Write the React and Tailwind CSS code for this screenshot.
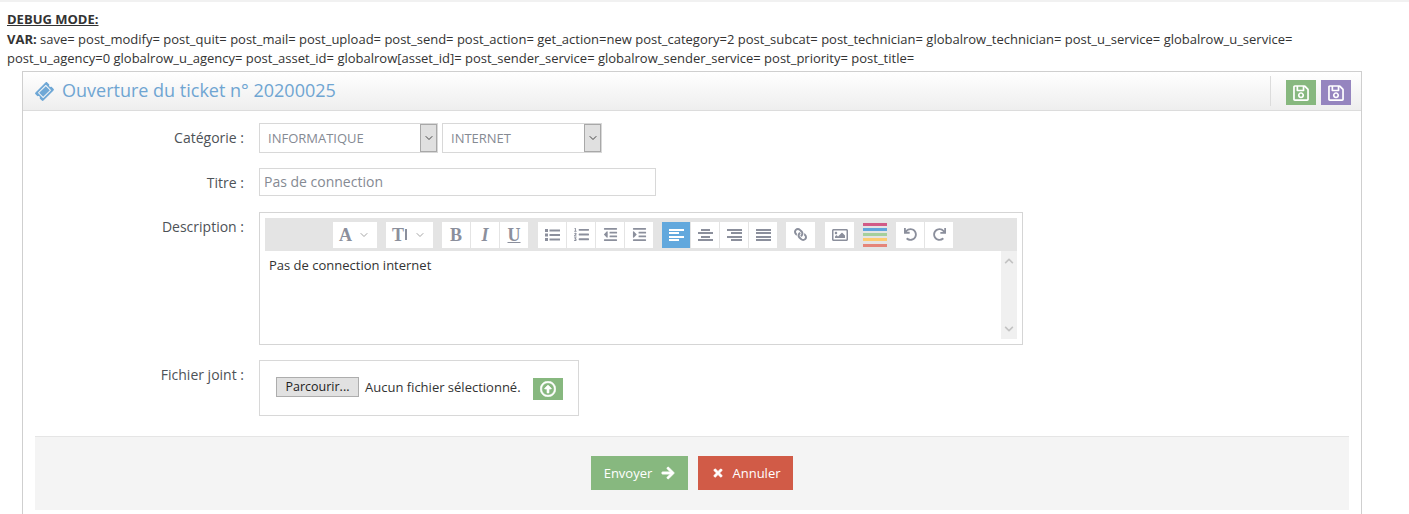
import React from "react";
import {
  FaTicketAlt,
  FaRegSave,
  FaListOl,
  FaOutdent,
  FaIndent,
  FaLink,
  FaRegImage,
  FaUndo,
  FaRedo,
  FaRegArrowAltCircleUp,
  FaArrowRight,
  FaTimes,
  FaChevronUp,
  FaChevronDown,
} from "react-icons/fa";
import { LuChevronDown } from "react-icons/lu";

// square-ended bars, the rounded ones from the icon pack look too thin here
function AlignIcon({ rows }) {
  return (
    <svg width="15" height="12" viewBox="0 0 15 12" fill="currentColor">
      {rows.map(([x, w], i) => (
        <rect key={i} x={x} y={[0, 3, 7, 10][i]} width={w} height="2" />
      ))}
    </svg>
  );
}

function ListUlIcon() {
  return (
    <svg width="15" height="12" viewBox="0 0 15 12" fill="currentColor">
      <rect x="0" y="0" width="3" height="3" />
      <rect x="0" y="4.5" width="3" height="3" />
      <rect x="0" y="9" width="3" height="3" />
      <rect x="4.5" y="0.5" width="10.5" height="2" />
      <rect x="4.5" y="5" width="10.5" height="2" />
      <rect x="4.5" y="9.5" width="10.5" height="2" />
    </svg>
  );
}

function ToolBtn({ children, active, className = "w-[28px]" }) {
  return (
    <div
      className={`h-[26px] flex items-center justify-center ${
        active ? "bg-[#62a8dd] text-white" : "bg-white text-[#8b8f9c]"
      } ${className}`}
    >
      {children}
    </div>
  );
}

function Glyph({ children, className = "" }) {
  return <span className={`text-[18px] leading-none font-bold font-['Liberation_Serif',serif] ${className}`}>{children}</span>;
}

function DropBtn({ children, width }) {
  return (
    <div className={`${width} h-[26px] bg-white text-[#8b8f9c] flex items-center pl-[6px] pr-[7px] justify-between`}>
      <div className="flex items-center">{children}</div>
      <LuChevronDown size={12} className="text-[#a5a5a5]" />
    </div>
  );
}

function Select({ value, width }) {
  return (
    <div className={`${width} h-[30px] border border-[#d8d8d8] flex items-stretch bg-white`}>
      <div className="flex-1 pl-[8px] text-[13px] leading-[29px] text-[#858a93]">{value}</div>
      <div className="w-[17px] bg-[#e0e0e0] border border-[#a8a8a8] flex items-center justify-center text-[#444]">
        <LuChevronDown size={12} />
      </div>
    </div>
  );
}

function Label({ children, className = "" }) {
  return <div className={`w-[221px] mr-[15px] text-right text-[14px] text-[#4d5257] ${className}`}>{children}</div>;
}

export default function App() {
  return (
    <div className="w-[1409px] h-[514px] overflow-hidden bg-white text-[13px] leading-[19.5px] text-[#333] font-['Open_Sans',sans-serif]">
      <div className="h-[2px] bg-[#f1f1f1]" />

      {/* Debug */}
      <div className="pl-[7px] pt-[8px] h-[69px]">
        <div className="font-bold underline">DEBUG MODE:</div>
        <div>
          <b>VAR:</b> save= post_modify= post_quit= post_mail= post_upload= post_send= post_action= get_action=new post_category=2 post_subcat= post_technician= globalrow_technician= post_u_service= globalrow_u_service=
        </div>
        <div>
          post_u_agency=0 globalrow_u_agency= post_asset_id= globalrow[asset_id]= post_sender_service= globalrow_sender_service= post_priority= post_title=
        </div>
      </div>

      {/* Panel */}
      <div className="ml-[22px] w-[1340px] h-[460px] border border-b-0 border-[#cfcfcf]">
        <div className="h-[39px] border-b border-[#dcdcdc] bg-gradient-to-b from-white to-[#eeeeee] flex items-center pl-[13px] pr-[10px]">
          <FaTicketAlt size={17} className="-rotate-45 text-[#6fa8d6] mr-[9px]" />
          <div className="text-[18px] text-[#6fa5d2]">Ouverture du ticket n° 20200025</div>
          <div className="ml-auto h-[30px] border-l border-[#dcdcdc] pl-[15px] flex gap-[5px]">
            <div className="w-[30px] h-[25px] mt-[4px] bg-[#87b87f] flex items-center justify-center text-white">
              <FaRegSave size={18} />
            </div>
            <div className="w-[30px] h-[25px] mt-[4px] bg-[#9585bf] flex items-center justify-center text-white">
              <FaRegSave size={18} />
            </div>
          </div>
        </div>

        <div className="pt-[12px]">
          <div className="flex items-center h-[30px]">
            <Label>Catégorie :</Label>
            <div className="flex gap-[4px]">
              <Select value="INFORMATIQUE" width="w-[179px]" />
              <Select value="INTERNET" width="w-[160px]" />
            </div>
          </div>

          <div className="flex items-center h-[28px] mt-[15px]">
            <Label className="pt-[2px]">Titre :</Label>
            <div className="w-[397px] h-[28px] border border-[#d8d8d8] pl-[4px] text-[14px] leading-[26px] text-[#858a93]">
              Pas de connection
            </div>
          </div>

          <div className="flex mt-[16px]">
            <Label className="pt-[5px]">Description :</Label>
            <div className="w-[764px] h-[133px] border border-[#d5d5d5] p-[5px]">
              <div className="h-[33px] bg-[#e4e4e4] flex items-center justify-center gap-[9px] pl-[4px]">
                <DropBtn width="w-[44px]">
                  <Glyph>A</Glyph>
                </DropBtn>
                <DropBtn width="w-[47px]">
                  <Glyph>T</Glyph>
                  <span className="w-[2px] h-[11px] bg-[#8b8f9c] ml-[1px]" />
                </DropBtn>
                <div className="flex gap-[1px]">
                  <ToolBtn><Glyph>B</Glyph></ToolBtn>
                  <ToolBtn><Glyph className="italic">I</Glyph></ToolBtn>
                  <ToolBtn><Glyph className="underline">U</Glyph></ToolBtn>
                </div>
                <div className="flex gap-[1px] ml-[1px]">
                  <ToolBtn><ListUlIcon /></ToolBtn>
                  <ToolBtn><FaListOl size={15} /></ToolBtn>
                  <ToolBtn><FaOutdent size={15} /></ToolBtn>
                  <ToolBtn><FaIndent size={15} /></ToolBtn>
                </div>
                <div className="flex gap-[1px]">
                  <ToolBtn active><AlignIcon rows={[[0, 15], [0, 10], [0, 15], [0, 10]]} /></ToolBtn>
                  <ToolBtn><AlignIcon rows={[[3, 9], [0, 15], [3, 9], [0, 15]]} /></ToolBtn>
                  <ToolBtn><AlignIcon rows={[[0, 15], [4, 11], [0, 15], [4, 11]]} /></ToolBtn>
                  <ToolBtn><AlignIcon rows={[[0, 15], [0, 15], [0, 15], [0, 15]]} /></ToolBtn>
                </div>
                <ToolBtn className="w-[29px]"><FaLink size={13} className="-scale-x-100" /></ToolBtn>
                <ToolBtn className="w-[29px] ml-[1px]"><FaRegImage size={16} /></ToolBtn>
                <div className="w-[24px] h-[24px] flex flex-col justify-between">
                  <div className="h-[3px] bg-[#d15b87]" />
                  <div className="h-[3px] bg-[#5fa5dc]" />
                  <div className="h-[3px] bg-[#a5cf9c]" />
                  <div className="h-[3px] bg-[#fdcb70]" />
                  <div className="h-[3px] bg-[#e58478]" />
                </div>
                <div className="flex gap-[1px]">
                  <ToolBtn><FaUndo size={13} /></ToolBtn>
                  <ToolBtn><FaRedo size={13} /></ToolBtn>
                </div>
              </div>
              <div className="h-[88px] flex">
                <div className="flex-1 pl-[4px] pt-[5px] text-[#333]">Pas de connection internet</div>
                <div className="w-[16px] bg-[#f0f0f0] flex flex-col items-center justify-between py-[5px] text-[#c3c3c3]">
                  <FaChevronUp size={10} />
                  <FaChevronDown size={10} />
                </div>
              </div>
            </div>
          </div>

          <div className="flex mt-[15px]">
            <Label className="pt-[5px]">Fichier joint :</Label>
            <div className="w-[320px] h-[56px] border border-[#d8d8d8] flex items-start pl-[16px] pt-[16px]">
              <div className="w-[83px] h-[20px] bg-[#e1e1e1] border border-[#adadad] text-center text-[12.5px] leading-[18px] text-[#222]">
                Parcourir...
              </div>
              <div className="ml-[6px] leading-[20px] text-[#333]">Aucun fichier sélectionné.</div>
              <div className="ml-[12px] mt-[1px] w-[30px] h-[22px] bg-[#87b87f] flex items-center justify-center text-white">
                <FaRegArrowAltCircleUp size={16} stroke="currentColor" strokeWidth={20} />
              </div>
            </div>
          </div>

          <div className="ml-[12px] mt-[20px] w-[1314px] h-[74px] bg-[#f4f4f4] border-t border-[#e5e5e5] flex justify-center gap-[10px] pt-[19px]">
            <div className="w-[97px] h-[34px] bg-[#87b87f] text-white flex items-center justify-center gap-[9px] text-[13px]">
              <span className="pt-[1px]">Envoyer</span>
              <FaArrowRight size={14} stroke="currentColor" strokeWidth={30} />
            </div>
            <div className="w-[95px] h-[34px] bg-[#d15b47] text-white flex items-center justify-center gap-[8px] pl-[2px] text-[13px]">
              <FaTimes size={12} stroke="currentColor" strokeWidth={30} />
              <span className="pt-[1px]">Annuler</span>
            </div>
          </div>
        </div>
      </div>
    </div>
  );
}
